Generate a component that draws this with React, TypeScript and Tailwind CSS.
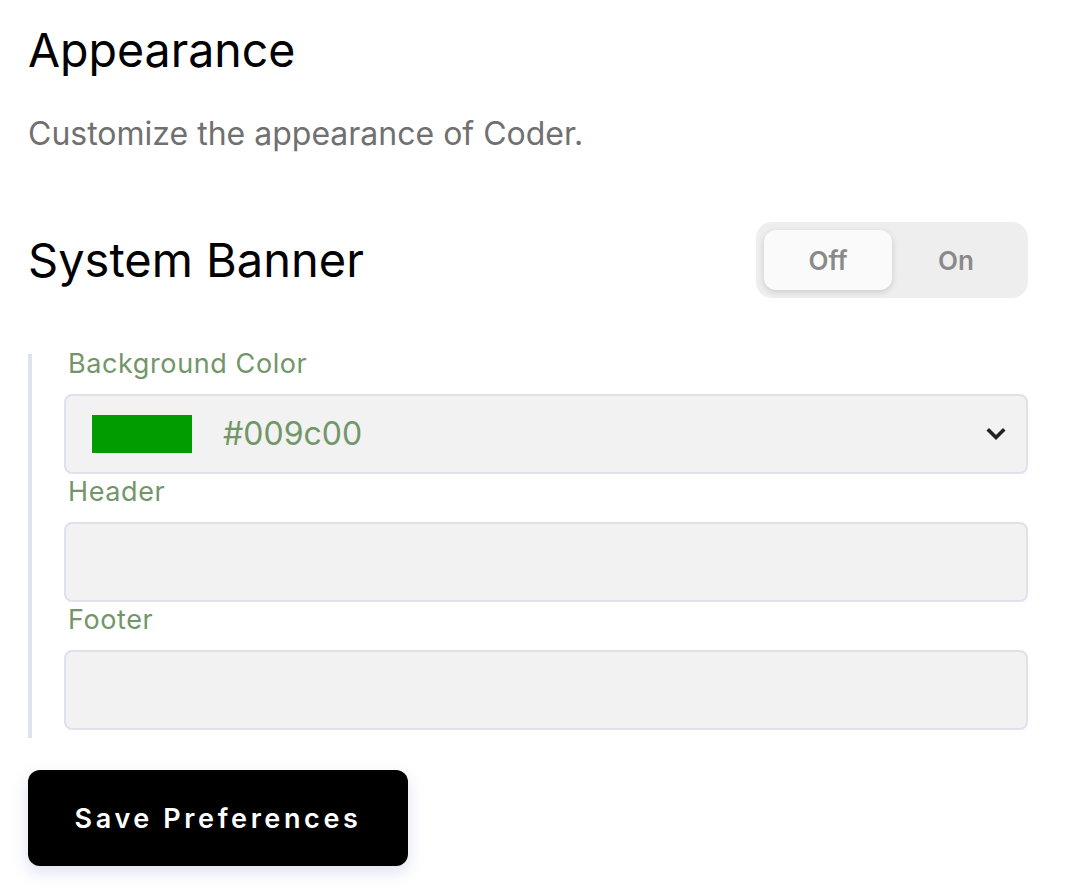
import React, { useState } from 'react'

const font = { fontFamily: 'Inter, "Noto Sans", sans-serif' }

function Field({ label, children }: { label: string; children: React.ReactNode }) {
  return (
    <div className="flex flex-col">
      <label className="pl-1 text-[27px] leading-[20px] text-[#739669] mb-5 tracking-[0.6px]">{label}</label>
      {children}
    </div>
  )
}

export default function App() {
  const [on, setOn] = useState(false)

  return (
    <div className="w-[1072px] min-h-[894px] bg-white pl-7 pr-11 pt-[22px] text-black" style={font}>
      <h1 className="text-[46.5px] leading-[56px] font-normal">Appearance</h1>
      <p className="mt-9 text-[32px] leading-[40px] text-[#707070]">Customize the appearance of Coder.</p>

      <div className="mt-[68px] flex items-center justify-between">
        <h2 className="text-[47px] leading-[56px] font-normal">System Banner</h2>
        <div className="flex h-[76px] w-[272px] items-center rounded-2xl bg-[#eeeeee] p-2">
          <button
            onClick={() => setOn(false)}
            className={`h-[60px] w-[128px] rounded-xl text-[26px] font-semibold text-[#8a8a8a] ${!on ? 'bg-[#fafafa] shadow-[0_2px_6px_rgba(0,0,0,0.15)]' : ''}`}
          >
            Off
          </button>
          <button
            onClick={() => setOn(true)}
            className={`h-[60px] w-[128px] rounded-xl text-[26px] font-semibold text-[#8a8a8a] ${on ? 'bg-[#fafafa] shadow-[0_2px_6px_rgba(0,0,0,0.15)]' : ''}`}
          >
            On
          </button>
        </div>
      </div>

      <div className="mt-14 flex flex-col gap-2 border-l-4 border-[#dfe2ec] pl-8 pb-2">
        <Field label="Background Color">
          <div className="flex h-20 items-center rounded-lg border-2 border-[#dfe2ec] bg-[#f2f2f2] pl-[26px] pr-5">
            <div className="h-[38px] w-[100px] bg-[#009c00]" />
            <span className="ml-[31px] flex-1 text-[32px] text-[#739669]">#009c00</span>
            <svg width="20" height="14" viewBox="0 0 20 14" fill="none">
              <path d="M3 3.5 L10 10.5 L17 3.5" stroke="#222" strokeWidth="3.6" strokeLinecap="square" />
            </svg>
          </div>
        </Field>
        <Field label="Header">
          <input className="h-20 rounded-lg border-2 border-[#dfe2ec] bg-[#f2f2f2] px-6 text-[28px] outline-none" />
        </Field>
        <Field label="Footer">
          <input className="h-20 rounded-lg border-2 border-[#dfe2ec] bg-[#f2f2f2] px-6 text-[28px] outline-none" />
        </Field>
      </div>

      <button className="mt-8 h-24 w-[380px] rounded-xl bg-black pt-0.5 text-[27px] font-semibold tracking-[3.6px] text-white shadow-[0_6px_16px_rgba(120,130,200,0.25)]">
        Save Preferences
      </button>
    </div>
  )
}
